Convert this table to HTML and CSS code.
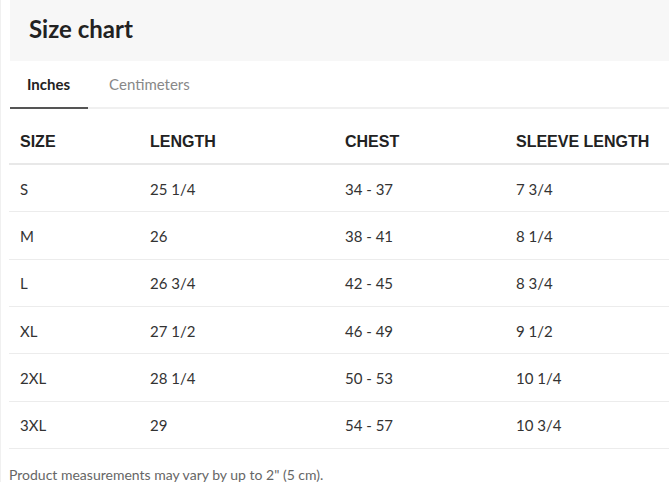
FILE: index.html
```html
<!DOCTYPE html>
<html>
<head>
<meta charset="utf-8">
<link rel="stylesheet" href="styles.css">
</head>
<body>
<div class="panel">
  <div class="head"><h1 class="title">Size chart</h1></div>
  <div class="tabs">
    <div class="tab active">Inches</div>
    <div class="tab">Centimeters</div>
  </div>
  <div class="table">
    <div class="row hrow"><div>SIZE</div><div>LENGTH</div><div>CHEST</div><div>SLEEVE LENGTH</div></div>
    <div class="row"><div>S</div><div>25 1/4</div><div>34 - 37</div><div>7 3/4</div></div>
    <div class="row"><div>M</div><div>26</div><div>38 - 41</div><div>8 1/4</div></div>
    <div class="row"><div>L</div><div>26 3/4</div><div>42 - 45</div><div>8 3/4</div></div>
    <div class="row"><div>XL</div><div>27 1/2</div><div>46 - 49</div><div>9 1/2</div></div>
    <div class="row"><div>2XL</div><div>28 1/4</div><div>50 - 53</div><div>10 1/4</div></div>
    <div class="row"><div>3XL</div><div>29</div><div>54 - 57</div><div>10 3/4</div></div>
  </div>
  <p class="note">Product measurements may vary by up to 2" (5 cm).</p>
</div>
</body>
</html>
```
FILE: styles.css
```css
html, body { margin: 0; padding: 0; background: #fff; }
body { font-family: Lato, "Open Sans", sans-serif; color: #333; overflow: hidden; }
.panel {
  width: 669px;
  height: 482px;
  box-sizing: border-box;
  padding-left: 8px;
  border-left: 1px solid #f0f0f0;
}
.head {
  background: #f7f7f7;
  height: 61px;
  margin-left: 1px;
  display: flex;
  align-items: center;
  padding-left: 19px;
}
.title {
  margin: 0;
  font-size: 24px;
  font-weight: 700;
  color: #222;
  padding-bottom: 5px;
}
.tabs {
  display: flex;
  gap: 4px;
  height: 46px;
  border-bottom: 2px solid #f0f0f0;
  margin-left: 1px;
}
.tab {
  font-size: 15px;
  color: #888;
  display: flex;
  align-items: center;
  padding: 0 17px 3px;
  margin-bottom: -2px;
}
.tab.active {
  color: #222;
  font-weight: 700;
  border-bottom: 2px solid #555;
  padding: 0 18px 1px 17px;
}
.table { display: flex; flex-direction: column; }
.row {
  display: grid;
  grid-template-columns: 130px 195px 171px 1fr;
  height: 47.33px;
  box-sizing: border-box;
  border-bottom: 1px solid #ececec;
  align-items: center;
  font-size: 15px;
  color: #333;
  padding-top: 1px;
}
.row > div { padding-left: 11px; }
.hrow {
  height: 56px;
  border-bottom: 2px solid #e8e8e8;
  font-family: "Liberation Sans", Arial, sans-serif;
  font-weight: 700;
  font-size: 16px;
  color: #222;
  padding-top: 12px;
}
.note {
  margin: 17px 0 0 0;
  font-size: 14px;
  color: #666;
}
```
